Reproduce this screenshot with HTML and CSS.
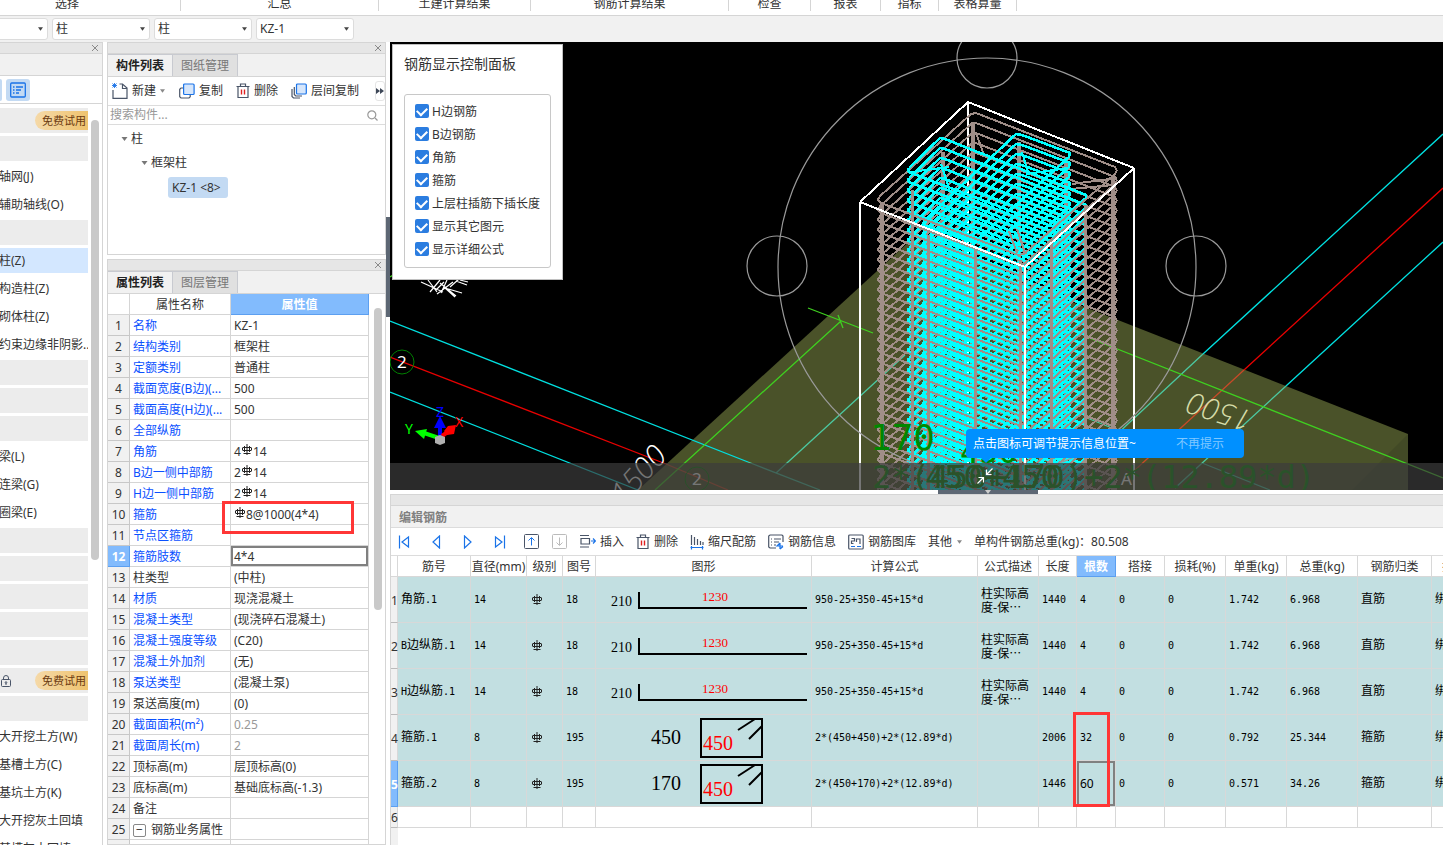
FILE: index.html
```html
<!DOCTYPE html>
<html lang="zh-CN">
<head>
<meta charset="utf-8">
<title>钢筋三维</title>
<link rel="stylesheet" href="styles.css">
</head>
<body>
<svg class="defs" aria-hidden="true">
  <symbol id="rebar" viewBox="0 0 10 11"><path d="M5 0v11M2.500 2v6M7.500 2v6M1 3.500h8M1 6.500h8M0.500 3.500v3M9.500 3.500v3M1.500 9.500h7" fill="none" stroke="#222" stroke-width="1"/></symbol>
  <symbol id="close" viewBox="0 0 8 8"><path d="M1 1l6 6M7 1l-6 6" fill="none" stroke="#8a8a8a"/></symbol>
  <symbol id="caret" viewBox="0 0 6 4"><path d="M0 0h6L3 4z" fill="currentColor"/></symbol>
  <symbol id="trash" viewBox="0 0 14 16"><path d="M0.500 3.500h13M2 3.500v11h10v-11M4.500 3V1h5v2" fill="none" stroke="#4a5568" stroke-width="1.200"/><path d="M5.500 6.500v5M8.500 6.500v5" stroke="#e02020" stroke-width="1.400"/></symbol>
  <symbol id="hoop" viewBox="0 0 215 45"><path d="M105 4h61v38h-61zM142 15l17-11M153 24l13-13" fill="none" stroke="#000" stroke-width="2"/></symbol>
  <symbol id="bar" viewBox="0 0 215 45"><path d="M43 15v16h168" fill="none" stroke="#000" stroke-width="2"/></symbol>
</svg>

<header class="ribbon">
  <span class="group g-select">选择</span><span class="group g-wide">汇总</span><span class="group g-mid">土建计算结果</span><span class="group g-wide">钢筋计算结果</span><span class="group g-check">检查</span><span class="group g-report">报表</span><span class="group g-index">指标</span><span class="group g-sheet">表格算量</span>
</header>

<div class="context">
  <label class="combo"><select aria-label="楼层"><option>首层</option></select><svg><use href="#caret"/></svg></label>
  <label class="combo"><select aria-label="构件大类"><option>柱</option></select><svg><use href="#caret"/></svg></label>
  <label class="combo"><select aria-label="构件类型"><option>柱</option></select><svg><use href="#caret"/></svg></label>
  <label class="combo"><select aria-label="构件"><option>KZ-1</option></select><svg><use href="#caret"/></svg></label>
</div>

<main class="work">
  <nav class="modules">
    <div class="strip"><button class="x" aria-label="关闭导航"><svg><use href="#close"/></svg></button></div>
    <div class="blank"></div>
    <div class="modes">
      <button class="mode edge" aria-label="图标视图"></button>
      <button class="mode" aria-label="列表视图"><svg width="16" height="16" viewBox="0 0 16 16" fill="none" stroke="#1a73e8" stroke-width="1.300"><rect x="0.700" y="1" width="14.600" height="14" rx="1"/><path d="M3 5h1.500M6 5h7M3 8h1.500M6 8h5M3 11h1.500M6 11h3"/></svg></button>
    </div>
    <div class="scroller">
      <div class="list">
        <div class="cat"><span class="badge">免费试用</span></div>
        <div class="cat"></div>
        <button class="item">轴网(J)</button>
        <button class="item">辅助轴线(O)</button>
        <div class="cat"></div>
        <button class="item on">柱(Z)</button>
        <button class="item">构造柱(Z)</button>
        <button class="item">砌体柱(Z)</button>
        <button class="item">约束边缘非阴影..</button>
        <div class="cat"></div>
        <div class="cat"></div>
        <div class="cat"></div>
        <button class="item">梁(L)</button>
        <button class="item">连梁(G)</button>
        <button class="item">圈梁(E)</button>
        <div class="cat"></div>
        <div class="cat"></div>
        <div class="cat"></div>
        <div class="cat"></div>
        <div class="cat"></div>
        <div class="cat"><svg class="lock" width="10" height="12" viewBox="0 0 10 12" fill="none" stroke="#4a5568"><rect x="0.500" y="4.500" width="9" height="7" rx="1"/><path d="M2.500 4.500V3a2.500 2.500 0 0 1 5 0v1.500M5 8v2"/><circle cx="5" cy="7.500" r="0.800"/></svg><span class="badge">免费试用</span></div>
        <div class="cat"></div>
        <button class="item">大开挖土方(W)</button>
        <button class="item">基槽土方(C)</button>
        <button class="item">基坑土方(K)</button>
        <button class="item">大开挖灰土回填</button>
        <button class="item">基槽灰土回填</button>
      </div>
      <div class="track"><div class="thumb"></div></div>
    </div>
  </nav>

  <div class="side">
    <section class="panel components">
      <div class="strip"><button class="x" aria-label="关闭构件列表"><svg><use href="#close"/></svg></button></div>
      <div class="tabs"><button class="tab on">构件列表</button><button class="tab">图纸管理</button></div>
      <div class="tools">
        <button class="tool new"><svg width="16" height="16" viewBox="0 0 16 16" fill="none" stroke="#4a5568" stroke-width="1.200"><path d="M1 7v8.300h14V5L10.500 1H7.500M10.500 1v4.500H15"/><path d="M0.500 0.500l4 4M4.500 0.500l-4 4M2.500 0v5M0 2.500h5" stroke="#1a73e8" stroke-width="0.900"/></svg>新建<svg class="drop"><use href="#caret"/></svg></button>
        <button class="tool copy"><svg width="16" height="16" viewBox="0 0 16 16" fill="none" stroke-width="1.200"><path d="M4.500 5H2L0.700 6.300v7.500L2 15h8l1.200-1.200V12" stroke="#4a5568"/><rect x="4.600" y="1" width="10.500" height="10.500" rx="1" fill="#d6e6fb" stroke="#1a73e8"/></svg>复制</button>
        <button class="tool del"><svg width="14" height="16"><use href="#trash"/></svg>删除</button>
        <button class="tool layer"><svg width="16" height="16" viewBox="0 0 16 16" fill="none" stroke-width="1.200"><path d="M1 6v7.500L2.500 15H9M3.300 4v7.500L4.700 13H11" stroke="#4a5568"/><rect x="5.500" y="1" width="9.800" height="10" rx="1" fill="#d6e6fb" stroke="#1a73e8"/></svg>层间复制</button>
        <button class="more" aria-label="更多"><svg width="8" height="6" viewBox="0 0 8 6"><path d="M0 0l4 3-4 3zM4 0l4 3-4 3z" fill="#3d4757"/></svg></button>
      </div>
      <label class="search"><input type="text" placeholder="搜索构件..." aria-label="搜索构件"><svg width="11" height="11" viewBox="0 0 11 11" fill="none" stroke="#999" stroke-width="1.200"><circle cx="4.800" cy="4.800" r="4"/><path d="M8 8l2.500 2.500"/></svg></label>
      <ul class="tree">
        <li class="l1"><svg><use href="#caret"/></svg>柱</li>
        <li class="l2"><svg><use href="#caret"/></svg>框架柱</li>
        <li class="l3"><span>KZ-1 &lt;8&gt;</span></li>
      </ul>
    </section>

    <section class="panel props">
      <div class="strip"><button class="x" aria-label="关闭属性列表"><svg><use href="#close"/></svg></button></div>
      <div class="tabs"><button class="tab on">属性列表</button><button class="tab">图层管理</button></div>
      <div class="sheet">
        <table class="attrs">
          <colgroup><col class="no"><col class="key"><col class="val"></colgroup>
          <thead><tr><th></th><th>属性名称</th><th class="sel">属性值</th></tr></thead>
          <tbody>
            <tr><th>1</th><td class="k">名称</td><td>KZ-1</td></tr>
            <tr><th>2</th><td class="k">结构类别</td><td>框架柱</td></tr>
            <tr><th>3</th><td class="k">定额类别</td><td>普通柱</td></tr>
            <tr><th>4</th><td class="k">截面宽度(B边)(...</td><td>500</td></tr>
            <tr><th>5</th><td class="k">截面高度(H边)(...</td><td>500</td></tr>
            <tr><th>6</th><td class="k">全部纵筋</td><td></td></tr>
            <tr><th>7</th><td class="k">角筋</td><td>4<svg class="rb"><use href="#rebar"/></svg>14</td></tr>
            <tr><th>8</th><td class="k">B边一侧中部筋</td><td>2<svg class="rb"><use href="#rebar"/></svg>14</td></tr>
            <tr><th>9</th><td class="k">H边一侧中部筋</td><td>2<svg class="rb"><use href="#rebar"/></svg>14</td></tr>
            <tr><th>10</th><td class="k">箍筋</td><td class="noted"><svg class="rb"><use href="#rebar"/></svg>8@1000(4*4)<i class="mark mark-prop"></i></td></tr>
            <tr><th>11</th><td class="k">节点区箍筋</td><td></td></tr>
            <tr><th class="sel">12</th><td class="k">箍筋肢数</td><td class="cursor">4*4</td></tr>
            <tr><th>13</th><td>柱类型</td><td>(中柱)</td></tr>
            <tr><th>14</th><td class="k">材质</td><td>现浇混凝土</td></tr>
            <tr><th>15</th><td class="k">混凝土类型</td><td>(现浇碎石混凝土)</td></tr>
            <tr><th>16</th><td class="k">混凝土强度等级</td><td>(C20)</td></tr>
            <tr><th>17</th><td class="k">混凝土外加剂</td><td>(无)</td></tr>
            <tr><th>18</th><td class="k">泵送类型</td><td>(混凝土泵)</td></tr>
            <tr><th>19</th><td>泵送高度(m)</td><td>(0)</td></tr>
            <tr><th>20</th><td class="k">截面面积(m²)</td><td class="off">0.25</td></tr>
            <tr><th>21</th><td class="k">截面周长(m)</td><td class="off">2</td></tr>
            <tr><th>22</th><td>顶标高(m)</td><td>层顶标高(0)</td></tr>
            <tr><th>23</th><td>底标高(m)</td><td>基础底标高(-1.3)</td></tr>
            <tr><th>24</th><td>备注</td><td></td></tr>
            <tr><th>25</th><td><button class="fold" aria-label="折叠">−</button>钢筋业务属性</td><td></td></tr>
            <tr><th></th><td></td><td></td></tr>
          </tbody>
        </table>
        <div class="track"><div class="thumb"></div></div>
      </div>
    </section>
  </div>

  <div class="splitter"><div class="grip"></div></div>

  <div class="stage">
    <section class="view">
      <svg class="scene" viewBox="390 42 1053 448" preserveAspectRatio="xMinYMin slice">
        <rect x="390" y="42" width="2000" height="1000"/>
        <path d="M912 239L1408 434V600H518z" fill="#4a5229"/>
        <path d="M1408 434L1352 490V600H1408z" fill="#424a26"/>
        <g fill="none" stroke-width="1.300">
          <path d="M390 321L748 462M390 392L638 490M1443 134L1203 354M1443 242L1286 386" stroke="#00e0e0"/>
          <path d="M748 462L820 490M776 473L905 355M1203 354L1115 436M1286 386L1175 488M1202 463L1270 490M1087 418L1112 428" stroke="#4cc8a0"/>
          <path d="M390 357L666 464M1443 188L1244 370" stroke="#e80000"/>
          <path d="M666 464L728 490M1244 370L1135 470" stroke="#c84a28"/>
          <path d="M655 490L841 321M808 308L873 333M838 315l5 13M1087 337L1443 478M390 277l3-2" stroke="#3fd020"/>
        </g>
        <path d="M421 282l22 10M428 280l9 12M430 292l10-12M437 294l16-12M447 280l-6 13M440 283l16 13M444 287l11 10M462 293l-17-5M456 281l11 4M450 287l9-8M436 290l8-8M460 280l8 2" stroke="#fff" stroke-width="1.200" fill="none"/>
        <g class="cage" id="cage"></g>
        <g fill="none" stroke="#9a9a9a" stroke-width="1.200">
          <circle cx="987" cy="267" r="209"/><circle cx="987" cy="58" r="30"/><circle cx="777" cy="266" r="30"/><circle cx="1196" cy="266" r="30"/>
        </g>
        <g class="cad">
          <circle cx="402" cy="362" r="12" fill="none" stroke="#008000"/><text x="397" y="368" class="t-axis">2</text>
          <circle cx="697" cy="479" r="12" fill="none" stroke="#008000"/><text x="692" y="485" class="t-axis">2</text>
          <text x="1121" y="485" class="t-axis">A</text>
          <text class="t-len" transform="translate(624 506) rotate(-48)">1500</text>
          <text class="t-len pale" transform="translate(1254 412) rotate(198)">1500</text>
          <text x="870" y="450" class="t-green big">170</text>
          <text x="960" y="463" class="t-green">450</text>
          <text x="872" y="488" class="t-green">2*(450+170)+2*(12.89*d)</text>
          <text x="925" y="488" class="t-green">450+450</text>
        </g>
        <g stroke-width="4" fill="none">
          <path d="M440 438V425" stroke="#00f"/><path d="M439 438L424 433" stroke="#0f0"/><path d="M442 436L452 429" stroke="#f00"/>
        </g>
        <path d="M440 416l6 12h-12z" fill="#00f"/><path d="M415 431l12-2-3 10z" fill="#0f0"/><path d="M456 425l-2 9-7 1-3-4 4-5z" fill="#f00"/><path d="M435 437l5-2 5 2v6l-5 2-5-2z" fill="#b0b0b0"/>
        <text x="405" y="434" class="t-gizmo gy">Y</text><text x="436" y="417" class="t-gizmo gz">Z</text><text x="455" y="427" class="t-gizmo gx">X</text>
      </svg>
      <div class="status"></div>
      <div class="tip">点击图标可调节提示信息位置~<button>不再提示</button></div>
      <button class="shrink" aria-label="收起"><svg width="16" height="16" viewBox="0 0 16 16" fill="none" stroke="#fff" stroke-width="1.200"><path d="M15.500 0.500L9.500 6.500M9.500 1.500v5h5M0.500 15.500l6-6M6.500 14.500v-5h-5"/></svg></button>
      <form class="display">
        <h2>钢筋显示控制面板</h2>
        <fieldset>
          <label><input type="checkbox" checked>H边钢筋</label>
          <label><input type="checkbox" checked>B边钢筋</label>
          <label><input type="checkbox" checked>角筋</label>
          <label><input type="checkbox" checked>箍筋</label>
          <label><input type="checkbox" checked>上层柱插筋下插长度</label>
          <label><input type="checkbox" checked>显示其它图元</label>
          <label><input type="checkbox" checked>显示详细公式</label>
        </fieldset>
      </form>
    </section>

    <div class="hsplit"><div class="grip"><svg><use href="#caret"/></svg></div></div>

    <section class="editor">
      <div class="strip"></div>
      <h2 class="caption">编辑钢筋</h2>
      <div class="bar">
        <button class="nav" aria-label="第一条"><svg viewBox="0 0 12 14"><path d="M1.500 0.500v13M10.500 2v10L4 7z"/></svg></button>
        <button class="nav" aria-label="上一条"><svg viewBox="0 0 12 14"><path d="M9.500 1v12L3 7z"/></svg></button>
        <button class="nav" aria-label="下一条"><svg viewBox="0 0 12 14"><path d="M2.500 1v12L9 7z"/></svg></button>
        <button class="nav" aria-label="最后一条"><svg viewBox="0 0 12 14"><path d="M10.500 0.500v13M1.500 2v10L8 7z"/></svg></button>
        <button class="move up" aria-label="上移"><svg width="15" height="15" viewBox="0 0 15 15" fill="none"><rect x="0.500" y="0.500" width="14" height="14" rx="1" stroke="#4a5568"/><path d="M7.500 11.500V4M4.500 6.500l3-3 3 3" stroke="#1a73e8"/></svg></button>
        <button class="move down" disabled aria-label="下移"><svg width="15" height="15" viewBox="0 0 15 15" fill="none" stroke="#bbb"><rect x="0.500" y="0.500" width="14" height="14" rx="1"/><path d="M7.500 3.500V11M4.500 8.500l3 3 3-3"/></svg></button>
        <button class="act ins"><svg width="16" height="15" viewBox="0 0 16 15" fill="none" stroke="#4a5568" stroke-width="1.200"><path d="M0 1.500h9M1 4.500h8.500v5.500h-8.500zM0 13h9"/><path d="M11 7h4.500M13 4.500l2.500 2.500-2.500 2.500" stroke="#1a73e8"/></svg>插入</button>
        <button class="act rem"><svg width="14" height="16"><use href="#trash"/></svg>删除</button>
        <button class="act scale"><svg width="14" height="16" viewBox="0 0 14 16" fill="none" stroke="#4a5568" stroke-width="1.200"><path d="M1.500 1v10M4.500 3v8M7.500 5v6M10.500 7v4M13 8v3"/><path d="M0.500 13.500h13M1.500 12v3.500M12.500 12v3.500" stroke="#1a73e8"/></svg>缩尺配筋</button>
        <button class="act info"><svg width="16" height="16" viewBox="0 0 16 16" fill="none" stroke="#4a5568" stroke-width="1.200"><path d="M8 14H2L0.700 13V2L2 1h12l1 1v6M3 5h1M6 5h7M3 8h1M6 8h5M3 11h1M6 11h2"/><path d="M12 9v6M12 15l3-2.500M12 9l-3 3h6" stroke="#1a73e8"/></svg>钢筋信息</button>
        <button class="act lib"><svg width="16" height="16" viewBox="0 0 16 16" fill="none" stroke="#4a5568" stroke-width="1.200"><rect x="0.700" y="1" width="14.500" height="14" rx="1"/><path d="M3.500 4.500h3v2.500h-3v2.500h2M8.500 8V5h3.500V10"/><path d="M3 12.500h4M9 12.500h4" stroke="#1a73e8"/></svg>钢筋图库</button>
        <button class="act other">其他<svg class="drop"><use href="#caret"/></svg></button>
        <span class="total">单构件钢筋总重(kg)：80.508</span>
      </div>
      <div class="grid">
        <table class="bars">
          <colgroup><col class="c0"><col class="c1"><col class="c2"><col class="c3"><col class="c4"><col class="c5"><col class="c6"><col class="c7"><col class="c8"><col class="c9"><col class="c10"><col class="c11"><col class="c12"><col class="c13"><col class="c14"><col class="c15"></colgroup>
          <thead><tr><th></th><th>筋号</th><th>直径(mm)</th><th>级别</th><th>图号</th><th>图形</th><th>计算公式</th><th>公式描述</th><th>长度</th><th class="sel">根数</th><th>搭接</th><th>损耗(%)</th><th>单重(kg)</th><th>总重(kg)</th><th>钢筋归类</th><th>搭接形式</th></tr></thead>
          <tbody>
            <tr><th>1</th><td><b>角筋</b>.1</td><td>14</td><td class="gr"><svg class="rb"><use href="#rebar"/></svg></td><td>18</td><td class="fig"><svg><use href="#bar"/><text x="15" y="29" class="f14">210</text><text x="106" y="24" class="f13">1230</text></svg></td><td>950-25+350-45+15*d</td><td class="desc">柱实际高<br>度-保⋯</td><td>1440</td><td>4</td><td>0</td><td>0</td><td>1.742</td><td>6.968</td><td><b>直筋</b></td><td><b>绑扎</b></td></tr>
            <tr><th>2</th><td>B<b>边纵筋</b>.1</td><td>14</td><td class="gr"><svg class="rb"><use href="#rebar"/></svg></td><td>18</td><td class="fig"><svg><use href="#bar"/><text x="15" y="29" class="f14">210</text><text x="106" y="24" class="f13">1230</text></svg></td><td>950-25+350-45+15*d</td><td class="desc">柱实际高<br>度-保⋯</td><td>1440</td><td>4</td><td>0</td><td>0</td><td>1.742</td><td>6.968</td><td><b>直筋</b></td><td><b>绑扎</b></td></tr>
            <tr><th>3</th><td>H<b>边纵筋</b>.1</td><td>14</td><td class="gr"><svg class="rb"><use href="#rebar"/></svg></td><td>18</td><td class="fig"><svg><use href="#bar"/><text x="15" y="29" class="f14">210</text><text x="106" y="24" class="f13">1230</text></svg></td><td>950-25+350-45+15*d</td><td class="desc">柱实际高<br>度-保⋯</td><td>1440</td><td>4</td><td>0</td><td>0</td><td>1.742</td><td>6.968</td><td><b>直筋</b></td><td><b>绑扎</b></td></tr>
            <tr><th>4</th><td><b>箍筋</b>.1</td><td>8</td><td class="gr"><svg class="rb"><use href="#rebar"/></svg></td><td>195</td><td class="fig"><svg><use href="#hoop"/><text x="55" y="29" class="f20">450</text><text x="107" y="35" class="f20 red">450</text></svg></td><td>2*(450+450)+2*(12.89*d)</td><td></td><td>2006</td><td class="noted">32<i class="mark mark-count"></i></td><td>0</td><td>0</td><td>0.792</td><td>25.344</td><td><b>箍筋</b></td><td><b>绑扎</b></td></tr>
            <tr><th class="sel">5</th><td><b>箍筋</b>.2</td><td>8</td><td class="gr"><svg class="rb"><use href="#rebar"/></svg></td><td>195</td><td class="fig"><svg><use href="#hoop"/><text x="55" y="29" class="f20">170</text><text x="107" y="35" class="f20 red">450</text></svg></td><td>2*(450+170)+2*(12.89*d)</td><td></td><td>1446</td><td class="cursor">60</td><td>0</td><td>0</td><td>0.571</td><td>34.26</td><td><b>箍筋</b></td><td><b>绑扎</b></td></tr>
            <tr class="empty"><th>6</th><td></td><td></td><td></td><td></td><td></td><td></td><td></td><td></td><td></td><td></td><td></td><td></td><td></td><td></td><td></td></tr>
          </tbody>
        </table>
      </div>
    </section>
  </div>
</main>
<script src="cage.js"></script>
</body>
</html>
```
FILE: cage.js
```js
// Builds the column outline and its reinforcement cage.
(function () {
  var cage = document.getElementById('cage');
  var NS = 'http://www.w3.org/2000/svg';
  var GRAY = '#a08e88', CYAN = '#00ffff', BOTTOM = 520, PITCH = 10;

  function path(d, color, width) {
    var p = document.createElementNS(NS, 'path');
    p.setAttribute('d', d);
    p.setAttribute('stroke', color);
    p.setAttribute('stroke-width', width);
    cage.appendChild(p);
  }
  function line(points) { return 'M' + points.map(function (p) { return p[0] + ' ' + p[1]; }).join('L'); }
  function stack(points, color, width) {
    var d = '';
    for (var dy = 0; dy < 400; dy += PITCH) {
      d += line(points.map(function (p) { return [p[0], p[1] + dy]; }));
    }
    path(d, color, width);
  }
  function bars(list, width) {
    path(list.map(function (b) { return 'M' + b[0] + ' ' + b[1] + 'V' + BOTTOM; }).join(''), GRAY, width);
  }

  path('M860 202L968 102L1134 168M968 102V490', '#ffffff', 2);

  stack([[879, 197], [971, 114], [976, 113], [1115, 167], [1117, 171]], GRAY, 2);
  bars([[882, 205], [943, 152], [973, 122], [1019, 142], [1066, 157], [1113, 178]], 4);
  path('M976 133l8 22M1117 178l-45 6M1113 185l-42 4', GRAY, 2);

  stack([[909, 168], [908, 171], [911, 173], [1048, 225], [1053, 226], [1086, 198], [1086, 195], [945, 139], [940, 138], [909, 168]], CYAN, 2.6);
  stack([[923, 222], [924, 225], [972, 242], [977, 240], [1069, 157], [1070, 153], [1022, 135], [1016, 134], [923, 222]], CYAN, 2.6);
  path('M941 164l8 24M1022 152l6 20M1026 174l42-6M911 172l38-5', CYAN, 2);
  bars([[912, 190], [928, 235], [975, 248], [1020, 260], [1051, 240], [1085, 205]], 3);

  stack([[879, 197], [878, 200], [881, 203], [1018, 255], [1024, 254], [1115, 174], [1117, 170]], GRAY, 2);
  path('M1009 231l8 22M1017 229l8 24', GRAY, 2);
  path('M860 202L1025 267L1134 168M860 202V520M1025 267V520M1134 168V520', '#ffffff', 2);
})();
```
FILE: styles.css
```css
* { box-sizing: border-box; }
html, body { height: 100%; }
body {
  margin: 0;
  display: flex;
  flex-direction: column;
  overflow: hidden;
  background: #fff;
  color: #333;
  font: 12px/18px "Noto Sans", "Noto Sans CJK SC", sans-serif;
}
button, input, select { font: inherit; color: inherit; }
button { border: 0; padding: 0; background: none; white-space: nowrap; }
h2 { margin: 0; font: inherit; }
svg { flex: none; }
.defs { display: none; }

/* ribbon */
.ribbon { flex: none; display: flex; height: 16px; overflow: hidden; border-bottom: 1px solid #d5d5d5; white-space: nowrap; }
.group { flex: none; display: flex; align-items: flex-end; justify-content: center; height: 11px; line-height: 15px; border-right: 1px solid #d5d5d5; }
.g-select { width: 227px; margin-left: -46px; }
.g-wide { width: 198px; }
.g-mid { width: 152px; }
.g-check { width: 82px; }
.g-report { width: 70px; }
.g-index { width: 58px; }
.g-sheet { width: 78px; }

/* context bar */
.context { flex: none; display: flex; gap: 4px; height: 26px; padding-top: 2px; margin-left: -50px; background: #f1f1f1; }
.combo { display: grid; width: 98px; height: 22px; }
.combo select, .combo svg { grid-area: 1 / 1; }
.combo select { appearance: none; width: 100%; border: 1px solid #dcdcdc; border-radius: 3px; background: #fff; padding: 0 3px; outline: 0; }
.combo svg { width: 5px; height: 4px; justify-self: end; align-self: center; margin-right: 5px; color: #444; }

.work { flex: 1; display: flex; min-height: 0; }
.strip { flex: none; display: flex; justify-content: flex-end; align-items: center; height: 12px; background: #e6e6e6; border-top: 1px solid #d5d5d5; border-bottom: 1px solid #d5d5d5; }
.x { display: flex; margin-right: 3px; }
.x svg { width: 8px; height: 8px; }
.track { flex: none; width: 8px; }
.thumb { border-radius: 4px; background: #c9c9c9; }

/* module navigation */
.modules { flex: none; display: flex; flex-direction: column; width: 103px; border-right: 1px solid #d5d5d5; min-height: 0; }
.blank { flex: none; height: 22px; background: #f1f1f1; border-bottom: 1px solid #d5d5d5; }
.modes { flex: none; display: flex; gap: 4px; height: 28px; align-items: center; border-bottom: 1px solid #d5d5d5; }
.mode { display: grid; place-items: center; width: 24px; height: 22px; border-radius: 3px; background: #c3daf3; }
.mode.edge { width: 2px; border-radius: 0 3px 3px 0; }
.scroller { flex: 1; display: flex; gap: 3px; min-height: 0; overflow: hidden; }
.list { display: flex; flex-direction: column; gap: 3px; width: 88px; padding-top: 4px; }
.cat, .item { flex: none; display: flex; align-items: center; width: 88px; height: 25px; overflow: hidden; }
.cat { background: #ececec; }
.item { text-align: left; text-indent: -1px; }
.item.on { background: #d3e7ff; }
.badge { flex: none; width: 60px; height: 19px; margin-left: auto; margin-right: -7px; padding-left: 7px; border-radius: 10px 0 0 10px; background: linear-gradient(90deg, #f5d9a8, #eec067); color: #6b3a10; line-height: 19px; font-size: 11px; }
.lock { margin-left: 1px; }
.modules .thumb { height: 440px; margin-top: 16px; }

/* side panels */
.side { flex: none; display: flex; flex-direction: column; gap: 4px; width: 279px; margin-left: 4px; min-height: 0; }
.panel { border: 1px solid #d5d5d5; border-top: 0; }
.components { flex: none; height: 213px; }
.props { flex: 1; min-height: 0; overflow: hidden; }
.tabs { display: flex; height: 23px; background: #f1f1f1; border-bottom: 1px solid #d5d5d5; }
.tab { width: 65px; border: 1px solid #c8cad0; border-left: 0; border-bottom: 0; background: #e0e0e0; color: #777; }
.tab.on { background: #f1f1f1; color: #222; font-weight: 600; }
.tools { display: flex; align-items: center; height: 29px; padding-left: 4px; border-bottom: 1px solid #dcdcdc; }
.tool { display: flex; align-items: center; gap: 4px; margin-right: 13px; }
.drop { width: 5px; height: 4px; color: #888; }
.new { margin-right: 14px; }
.more { display: grid; place-items: center; width: 10px; height: 20px; margin-left: auto; border: 1px solid #e5e5e5; border-radius: 3px; }
.search { display: flex; align-items: center; height: 19px; padding: 0 7px 0 2px; border-bottom: 1px solid #dcdcdc; }
.search input { flex: 1; min-width: 0; border: 0; padding: 0; height: 18px; outline: 0; }
.search input::placeholder { color: #999; opacity: 1; }
.tree { margin: 0; padding: 2px 0 0; list-style: none; }
.tree li { display: flex; align-items: center; gap: 3px; height: 24px; }
.tree svg { width: 7px; height: 4px; color: #777; }
.l1 { padding-left: 13px; }
.l2 { padding-left: 33px; }
.l3 { padding-left: 60px; }
.l3 span { padding: 1px 7px 1px 4px; border-radius: 3px; background: #c3daf3; line-height: 19px; }

.sheet { display: flex; gap: 5px; }
.sheet .thumb { height: 302px; margin-top: 14px; }
table { border-collapse: separate; border-spacing: 0; table-layout: fixed; }
th { font-weight: 400; padding: 0; }
.attrs { flex: none; width: 261px; }
.attrs .no { width: 22px; }
.attrs .key { width: 101px; }
.attrs .val { width: 138px; }
.attrs tr { height: 21px; }
.attrs th, .attrs td { border-right: 1px solid #d5d5d5; border-bottom: 1px solid #d5d5d5; line-height: 18px; white-space: nowrap; height: 21px; padding-top: 2px; }
.attrs tbody th { background: #f1f1f1; border-color: #c8c8c8; }
.attrs td { padding: 2px 3px 0; overflow: hidden; }
.attrs td.k { color: #0a50ff; }
.attrs td.off { color: #999; }
.attrs th.sel, .bars th.sel { background: #82bbfd; color: #fff; font-weight: 700; border-color: #5c9ff0; }
td.cursor { box-shadow: inset 0 0 0 2px #808080; }
.rb { width: 10px; height: 11px; margin: 0 1px; vertical-align: 1px; }
.fold { width: 13px; height: 13px; margin-right: 5px; border: 1px solid #888; border-radius: 2px; line-height: 10px; }
.attrs td.noted, .bars td.noted { position: relative; overflow: visible; }
.mark { position: absolute; border: 3px solid #ff3636; pointer-events: none; }
.mark-prop { left: -9px; top: -3px; width: 132px; height: 33px; }
.mark-count { left: -4px; top: -3px; width: 37px; height: 95px; z-index: 1; }

.splitter { flex: none; width: 4px; padding-top: 175px; }
.splitter .grip { height: 100px; background: #5d6774; }

/* 3D view */
.stage { flex: 1; display: flex; flex-direction: column; min-width: 0; }
.view { flex: 448 0 0; position: relative; min-height: 0; overflow: hidden; background: #000; }
.scene { display: block; width: 100%; height: 100%; }
.cage { fill: none; stroke-linejoin: round; shape-rendering: crispEdges; }
.t-axis { fill: #fff; font-size: 17px; }
.t-len { fill: #fff; font-family: "Open Sans", sans-serif; font-size: 30px; font-weight: 300; font-style: italic; }
.t-len.pale { fill: #d5dca8; }
.t-green { fill: #008800; font-family: "DejaVu Sans Mono", monospace; font-size: 32px; }
.t-green.big { font-size: 36px; }
.t-gizmo { font-size: 14px; }
.gx { fill: #f00; }
.gy { fill: #0f0; }
.gz { fill: #00f; }
.status { position: absolute; left: 0; right: 0; bottom: 0; height: 27px; background: rgba(60, 60, 60, 0.7); }
.tip { position: absolute; left: 576px; bottom: 32px; display: flex; align-items: center; justify-content: space-between; width: 278px; height: 29px; padding: 0 20px 0 7px; border-radius: 4px; background: #0090ff; color: #fff; white-space: nowrap; }
.tip::after { content: ""; position: absolute; left: 15px; top: 29px; border: 5px solid transparent; border-top-color: #0090ff; border-bottom: 0; }
.tip button { color: #80c8ff; }
.shrink { position: absolute; left: 587px; bottom: 6px; display: flex; }
.display { position: absolute; left: 2px; top: 2px; width: 171px; padding: 10px 11px 11px; border: 1px solid #c0c0c0; background: #fff; }
.display h2 { font-size: 14px; line-height: 18px; }
.display fieldset { display: grid; gap: 5px; margin: 21px 0 0; padding: 8px 10px 8px; border: 1px solid #c8c8c8; border-radius: 3px; }
.display label { display: flex; align-items: center; gap: 3px; height: 18px; white-space: nowrap; }
.display input { appearance: none; display: grid; place-items: center; width: 14px; height: 14px; margin: 0 0 2px; border-radius: 2px; background: #2b7de0; }
.display input::before { content: ""; width: 8px; height: 5px; margin-top: -2px; border: solid #fff; border-width: 0 0 2px 2px; transform: rotate(-45deg); }

.hsplit { flex: none; height: 4px; }
.hsplit .grip { display: flex; justify-content: center; width: 100px; height: 4px; margin-left: 548px; background: #5d6774; color: #ccc; }
.hsplit svg { width: 6px; height: 4px; }

/* rebar editor */
.editor { flex: 351 0 0; display: flex; flex-direction: column; min-height: 0; overflow: hidden; border-left: 1px solid #d5d5d5; }
.caption { flex: none; height: 22px; padding-left: 8px; border-bottom: 1px solid #dcdcdc; background: #f1f1f1; color: #808080; font-weight: 600; line-height: 23px; }
.bar { flex: none; display: flex; align-items: center; height: 28px; padding-left: 7px; border-bottom: 1px solid #dcdcdc; line-height: 20px; white-space: nowrap; }
.nav { display: flex; width: 12px; margin-right: 20px; }
.nav svg { width: 12px; height: 14px; fill: none; stroke: #1a73e8; stroke-width: 1.2; }
.move, .act { display: flex; align-items: center; gap: 5px; margin-right: 13px; }
.up { margin-left: -2px; }
.act { margin-right: 12px; gap: 4px; }
.other { margin-right: 12px; gap: 5px; }
.grid { flex: 1; overflow: hidden; }
.grid::before { content: ""; float: left; width: 7px; height: 100%; margin-right: -7px; background: #f1f1f1; }
.bars { position: relative; width: 1110px; color: #000; }
.c0 { width: 7px; } .c1 { width: 73px; } .c2 { width: 56px; } .c3 { width: 36px; }
.c4 { width: 33px; } .c5 { width: 216px; } .c6 { width: 166px; } .c7 { width: 61px; }
.c8 { width: 38px; } .c9 { width: 39px; } .c10 { width: 49px; } .c11 { width: 61px; }
.c12 { width: 61px; } .c13 { width: 71px; } .c14 { width: 74px; } .c15 { width: 69px; }
.bars th, .bars td { border-right: 1px solid #d8d8d8; border-bottom: 1px solid #d8d8d8; white-space: nowrap; }
.bars thead th { height: 21px; padding-top: 2px; background: #fff; color: #333; line-height: 18px; }
.bars tbody th { padding-top: 2px; background: #f1f1f1; color: #333; text-align: left; border-bottom-color: #bbb; }
.bars tbody th.sel { background: #82bbfd; color: #fff; }
.bars td { height: 46px; padding: 0 3px; background: #c2dfe1; font: 10px/14px "DejaVu Sans Mono", "Noto Sans CJK SC", monospace; }
.bars td b { font-weight: 400; font-size: 12px; }
.bars .empty td { height: 21px; background: #fff; }
.bars td.desc { font-family: "Noto Sans CJK SC", sans-serif; font-size: 12px; }
.bars td.gr { padding: 5px 4px 0; }
.bars td.fig { padding: 0; }
.bars td.cursor { font: 12px/18px "Noto Sans", sans-serif; }
.fig svg { display: block; width: 215px; height: 45px; font-family: "Liberation Serif", serif; }
.f14 { font-size: 14px; }
.f13 { font-size: 13px; fill: #f00; }
.f20 { font-size: 20px; }
.red { fill: #f00; }
```
